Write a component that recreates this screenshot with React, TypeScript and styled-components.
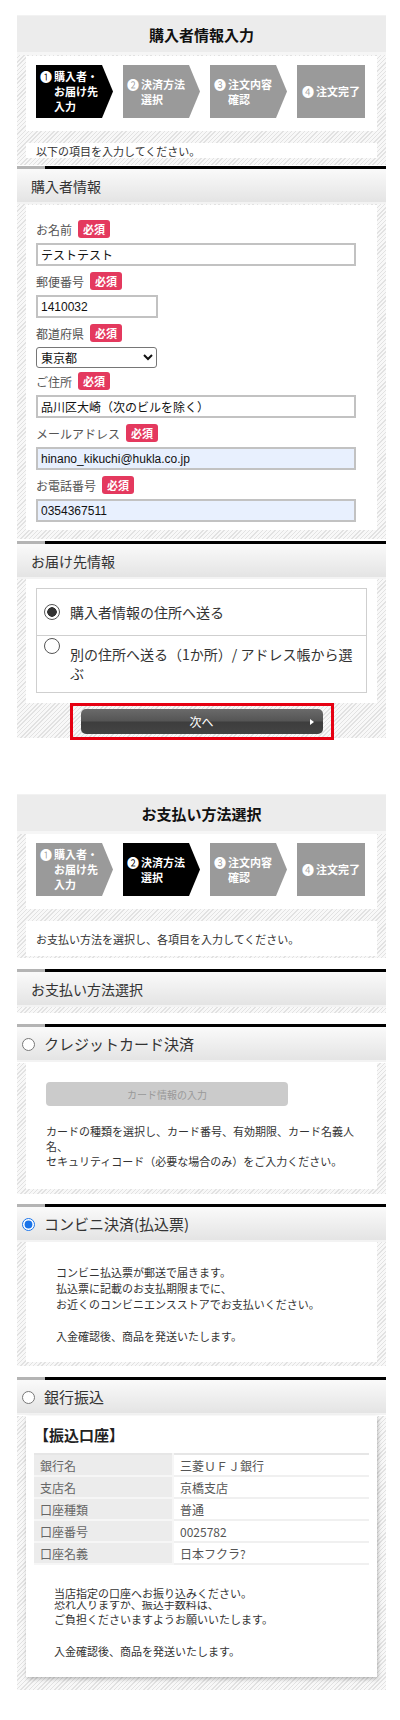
import React from 'react';
import styled, { createGlobalStyle } from 'styled-components';

const GlobalStyle = createGlobalStyle`
  body {
    margin: 0;
    background: #fff;
    font-family: "Noto Sans CJK JP", "Noto Sans", sans-serif;
    color: #333;
  }
`;

const Page = styled.div`
  padding-top: 15px;
  padding-bottom: 25px;
`;

const Panel = styled.div<{ $top?: number }>`
  width: 369px;
  margin-left: 17px;
  margin-top: ${(p) => p.$top || 0}px;
`;

const TitleBar = styled.div`
  height: 36px;
  border-top: 1px solid #f2f2f2;
  border-bottom: 3px solid #f6f6f6;
  background: #ececec;
  display: flex;
  align-items: center;
  justify-content: center;
  font-size: 15px;
  font-weight: bold;
  color: #111;
`;

const Striped = styled.div<{ $pt?: number; $pb?: number }>`
  padding: ${(p) => p.$pt ?? 0}px 9px ${(p) => p.$pb ?? 0}px 9px;
  background-color: #f7f7f7;
  background-image: repeating-linear-gradient(
    -45deg,
    #e2e2e2 0px,
    #e2e2e2 1px,
    #f8f8f8 1px,
    #f8f8f8 3px
  );
`;

const WhiteBox = styled.div<{ $shadow?: boolean }>`
  background: #fff;
  box-shadow: ${(p) => (p.$shadow ? '1px 2px 4px rgba(0,0,0,0.25)' : 'none')};
`;

const StepsBox = styled(WhiteBox)`
  height: 75px;
  padding: 9px 10px 0 10px;
  box-sizing: border-box;
  display: flex;
  gap: 10px;
`;

const Step = styled.div<{ $active?: boolean; $last?: boolean }>`
  width: ${(p) => (p.$last ? 68 : 77)}px;
  height: 53px;
  flex: none;
  background: ${(p) => (p.$active ? '#000' : '#9a9a9a')};
  clip-path: ${(p) =>
    p.$last ? 'none' : 'polygon(0 0, 66px 0, 77px 50%, 66px 100%, 0 100%)'};
  display: flex;
  align-items: center;
  justify-content: ${(p) => (p.$last ? 'center' : 'flex-start')};
  padding-left: ${(p) => (p.$last ? 0 : 4)}px;
  box-sizing: border-box;
  color: #fff;
  font-size: 11px;
  font-weight: bold;
  line-height: 15px;
`;

const StepInner = styled.div`
  display: flex;
  align-items: flex-start;
`;

const StepNum = styled.span`
  font-family: "Noto Sans CJK JP", sans-serif;
  font-size: 12px;
  font-weight: normal;
  margin-right: 2px;
`;

const Intro = styled(WhiteBox)<{ $h: number }>`
  height: ${(p) => p.$h}px;
  margin-top: 12px;
  padding-left: 10px;
  display: flex;
  align-items: center;
  font-size: 11px;
  color: #333;
`;

const SectionHead = styled.div<{ $top?: number; $radio?: boolean }>`
  margin-top: ${(p) => p.$top ?? 0}px;
  height: 33px;
  border-image: linear-gradient(to right, #b4b4b4 29px, #000 29px) 1;
  border-width: 3px 0 0 0;
  border-style: solid;
  background: linear-gradient(#fafafa, #e4e4e4);
  box-shadow: 0 2px 0 #f3f3f3;
  margin-bottom: 2px;
  display: flex;
  align-items: center;
  padding-left: ${(p) => (p.$radio ? 5 : 14)}px;
  font-size: ${(p) => (p.$radio ? 15 : 14)}px;
  color: #333;
`;

const HeadRadio = styled.input`
  width: 13px;
  height: 13px;
  margin: 2px 9px 0 0;
  accent-color: #1a73e8;
`;

const FormBox = styled(WhiteBox)`
  padding: 15px 20px 8px 10px;
  & > input:last-child {
    margin-bottom: 0;
  }
`;

const LabelRow = styled.div`
  height: 18px;
  margin-bottom: 5px;
  display: flex;
  align-items: center;
  gap: 6px;
  font-size: 12px;
  color: #555;
`;

const Badge = styled.span`
  display: inline-flex;
  align-items: center;
  justify-content: center;
  width: 32px;
  height: 18px;
  border-radius: 3px;
  background: #e4395e;
  color: #fff;
  font-size: 11px;
  font-weight: bold;
`;

const TextInput = styled.input<{ $w: number; $filled?: boolean }>`
  display: block;
  width: ${(p) => p.$w}px;
  height: 23px;
  box-sizing: border-box;
  margin: 0 0 6px 0;
  padding: 0 3px;
  border: 2px solid #c2c2c2;
  background: ${(p) => (p.$filled ? '#e8f0fe' : '#fff')};
  font-family: "Liberation Sans", "Noto Sans CJK JP", sans-serif;
  font-size: 12px;
  color: #111;
  outline: none;
`;

const Select = styled.select`
  display: block;
  width: 121px;
  height: 21px;
  margin: 0 0 4px 0;
  border: 1px solid #767676;
  border-radius: 3px;
  background: #fff;
  font-family: "Noto Sans CJK JP", sans-serif;
  font-size: 12px;
  color: #111;
`;

const DeliveryBox = styled(WhiteBox)`
  padding: 9px 10px 10px 10px;
`;

const DeliveryList = styled.div`
  border: 1px solid #cfcfcf;
`;

const DeliveryRow = styled.div<{ $h: number }>`
  min-height: ${(p) => p.$h}px;
  display: flex;
  align-items: center;
  padding-left: 7px;
  box-sizing: border-box;
  font-size: 14px;
  line-height: 19px;
  color: #333;
  & + & {
    border-top: 1px solid #cfcfcf;
  }
`;

const RadioMark = styled.span<{ $checked?: boolean }>`
  flex: none;
  width: 16px;
  height: 16px;
  box-sizing: border-box;
  border-radius: 50%;
  border: 1.5px solid #555;
  background: ${(p) =>
    p.$checked ? 'radial-gradient(circle, #333 0 4.5px, #fff 5px)' : '#fff'};
  margin-right: 10px;
  align-self: ${(p) => (p.$checked ? 'center' : 'flex-start')};
  margin-top: ${(p) => (p.$checked ? 0 : 2)}px;
`;

const DeliveryText = styled.span`
  padding-right: 12px;
`;

const NextRow = styled.div`
  display: flex;
  justify-content: center;
`;

const RedFrame = styled.div`
  border: 3px solid #e60012;
  padding: 3px 8px 3px 8px;
  margin-bottom: -2px;
  position: relative;
`;

const NextButton = styled.div`
  position: relative;
  width: 242px;
  height: 25px;
  border-radius: 5px;
  background: linear-gradient(#6a6a6a 0%, #555 48%, #3d3d3d 52%, #444 100%);
  color: #fff;
  font-size: 12px;
  display: flex;
  align-items: center;
  justify-content: center;
`;

const NextArrow = styled.span`
  position: absolute;
  right: 9px;
  top: 10px;
  width: 0;
  height: 0;
  border-left: 4px solid #fff;
  border-top: 3px solid transparent;
  border-bottom: 3px solid transparent;
`;

const Gap = styled.div<{ $h: number }>`
  height: ${(p) => p.$h}px;
`;

const CardBox = styled(WhiteBox)`
  margin-top: 3px;
  padding: 19px 20px 20px 20px;
`;

const CardButton = styled.div`
  width: 242px;
  height: 24px;
  border-radius: 4px;
  background: #cbcbcb;
  color: #999;
  font-size: 10px;
  display: flex;
  align-items: center;
  justify-content: center;
  margin-bottom: 18px;
`;

const Note = styled.div<{ $lh: number }>`
  font-size: 11px;
  line-height: ${(p) => p.$lh}px;
  color: #333;
`;

const KonbiniBox = styled(WhiteBox)`
  margin-top: 2px;
  padding: 22px 30px 18px 30px;
`;

const BankBox = styled(WhiteBox)`
  margin-top: 3px;
  padding: 9px 8px 18px 8px;
`;

const BankTitle = styled.div`
  font-size: 15px;
  font-weight: bold;
  line-height: 20px;
  color: #222;
  margin-bottom: 8px;
`;

const BankTable = styled.table`
  width: 100%;
  border-collapse: collapse;
  border-top: 2px solid #e6e6e6;
  border-bottom: 2px solid #dedede;
  font-size: 12px;
`;

const Th = styled.td`
  width: 132px;
  height: 20px;
  padding: 0 0 0 6px;
  background: #ececec;
  color: #666;
  border-bottom: 2px solid #f6f6f6;
  border-right: 2px solid #f6f6f6;
`;

const Td = styled.td`
  padding: 0 0 0 6px;
  color: #555;
  border-bottom: 2px solid #f0f0f0;
`;

const BankNote = styled(Note)`
  padding: 20px 0 0 20px;
`;

const ClipLine = styled.div`
  height: 10px;
  overflow: hidden;
  display: flex;
  align-items: flex-end;
  line-height: 13px;
`;

const steps = [
  ['購入者・', 'お届け先', '入力'],
  ['決済方法', '選択'],
  ['注文内容', '確認'],
  ['注文完了'],
];
const nums = ['❶', '❷', '❸', '❹'];

const Steps: React.FC<{ active: number }> = ({ active }) => (
  <StepsBox>
    {steps.map((lines, i) => (
      <Step key={i} $active={i === active} $last={i === 3}>
        <StepInner>
          <StepNum>{nums[i]}</StepNum>
          <div>
            {lines.map((l) => (
              <div key={l}>{l}</div>
            ))}
          </div>
        </StepInner>
      </Step>
    ))}
  </StepsBox>
);

const bankRows = [
  ['銀行名', '三菱ＵＦＪ銀行'],
  ['支店名', '京橋支店'],
  ['口座種類', '普通'],
  ['口座番号', '0025782'],
  ['口座名義', '日本フクラ?'],
];

const App: React.FC = () => {
  return (
    <Page>
      <GlobalStyle />
      <Panel>
        <TitleBar>購入者情報入力</TitleBar>
        <Striped $pt={1} $pb={7}>
          <Steps active={0} />
          <Intro $h={15}>以下の項目を入力してください。</Intro>
        </Striped>

        <SectionHead $top={1}>購入者情報</SectionHead>
        <Striped $pt={1} $pb={9}>
          <FormBox>
            <LabelRow>お名前<Badge>必須</Badge></LabelRow>
            <TextInput $w={320} defaultValue="テストテスト" readOnly />
            <LabelRow>郵便番号<Badge>必須</Badge></LabelRow>
            <TextInput $w={122} defaultValue="1410032" readOnly />
            <LabelRow>都道府県<Badge>必須</Badge></LabelRow>
            <Select defaultValue="東京都">
              <option>東京都</option>
            </Select>
            <LabelRow>ご住所<Badge>必須</Badge></LabelRow>
            <TextInput $w={320} defaultValue="品川区大崎（次のビルを除く）" readOnly />
            <LabelRow>メールアドレス<Badge>必須</Badge></LabelRow>
            <TextInput $w={320} $filled defaultValue="hinano_kikuchi@hukla.co.jp" readOnly />
            <LabelRow>お電話番号<Badge>必須</Badge></LabelRow>
            <TextInput $w={320} $filled defaultValue="0354367511" readOnly />
          </FormBox>
        </Striped>

        <SectionHead $top={2}>お届け先情報</SectionHead>
        <Striped>
          <DeliveryBox>
            <DeliveryList>
              <DeliveryRow $h={46}>
                <RadioMark $checked />
                <DeliveryText>購入者情報の住所へ送る</DeliveryText>
              </DeliveryRow>
              <DeliveryRow $h={57}>
                <RadioMark />
                <DeliveryText>別の住所へ送る（1か所）/ アドレス帳から選ぶ</DeliveryText>
              </DeliveryRow>
            </DeliveryList>
          </DeliveryBox>
          <NextRow>
            <RedFrame>
              <NextButton>
                次へ
                <NextArrow />
              </NextButton>
            </RedFrame>
          </NextRow>
        </Striped>
      </Panel>

      <Panel $top={56}>
        <TitleBar>お支払い方法選択</TitleBar>
        <Striped $pb={2}>
          <Steps active={1} />
          <Intro $h={35}>お支払い方法を選択し、各項目を入力してください。</Intro>
        </Striped>

        <Gap $h={11} />
        <SectionHead>お支払い方法選択</SectionHead>
        <Striped $pb={6} />

        <Gap $h={11} />
        <SectionHead $radio>
          <HeadRadio type="radio" name="pay" readOnly />
          クレジットカード決済
        </SectionHead>
        <Striped $pb={5}>
          <CardBox>
            <CardButton>カード情報の入力</CardButton>
            <Note $lh={15}>
              カードの種類を選択し、カード番号、有効期限、カード名義人名、
              <br />
              セキュリティコード（必要な場合のみ）をご入力ください。
            </Note>
          </CardBox>
        </Striped>

        <Gap $h={10} />
        <SectionHead $radio>
          <HeadRadio type="radio" name="pay" defaultChecked />
          コンビニ決済(払込票)
        </SectionHead>
        <Striped $pb={4}>
          <KonbiniBox>
            <Note $lh={16}>
              コンビニ払込票が郵送で届きます。
              <br />
              払込票に記載のお支払期限までに、
              <br />
              お近くのコンビニエンスストアでお支払いください。
              <br />
              <br />
              入金確認後、商品を発送いたします。
            </Note>
          </KonbiniBox>
        </Striped>

        <Gap $h={11} />
        <SectionHead $radio>
          <HeadRadio type="radio" name="pay" readOnly />
          銀行振込
        </SectionHead>
        <Striped $pb={13}>
          <BankBox $shadow>
            <BankTitle>【振込口座】</BankTitle>
            <BankTable>
              <tbody>
                {bankRows.map(([k, v]) => (
                  <tr key={k}>
                    <Th>{k}</Th>
                    <Td>{v}</Td>
                  </tr>
                ))}
              </tbody>
            </BankTable>
            <BankNote $lh={16}>
              当店指定の口座へお振り込みください。
              <ClipLine>恐れ入りますが、振込手数料は、</ClipLine>
              ご負担くださいますようお願いいたします。
              <br />
              <br />
              入金確認後、商品を発送いたします。
            </BankNote>
          </BankBox>
        </Striped>
      </Panel>
    </Page>
  );
};

export default App;
